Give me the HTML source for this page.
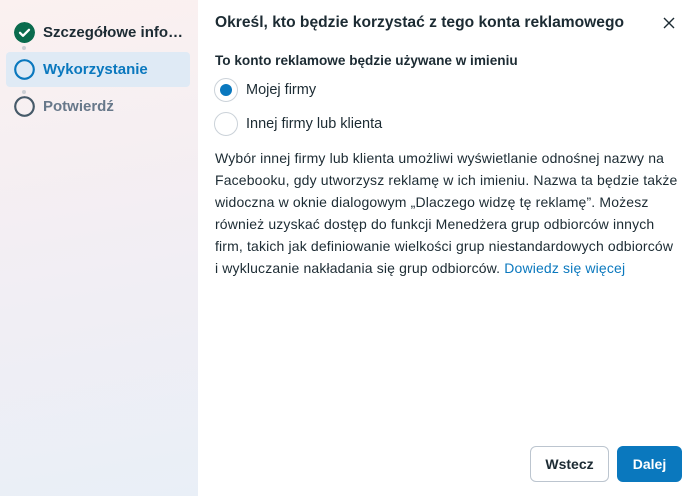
<!DOCTYPE html>
<html><head><meta charset="utf-8"><style>
*{margin:0;padding:0;box-sizing:border-box}
body{width:696px;height:496px;overflow:hidden;font-family:"Liberation Sans",sans-serif;color:#1c2b33;background:#fff;position:relative}
.side{position:absolute;left:0;top:0;width:198px;height:496px;background:linear-gradient(170deg,#fbf1f0 0%,#f3eef3 45%,#e9eff7 100%)}
.step{position:absolute;left:6px;width:184px;height:35px;display:flex;align-items:center;padding-left:8px;font-size:15px;font-weight:bold}
.step .ic{width:21px;height:21px;border-radius:50%;margin-right:8px;flex:none}
.dot{position:absolute;left:22px;width:4px;height:4px;border-radius:50%;background:#ccd0d5}
.main{position:absolute;left:198px;top:0;right:0;bottom:0}
h1{position:absolute;left:17px;top:14px;font-size:15.6px;font-weight:bold;color:#1c2b33}
.x{position:absolute;left:464px;top:16px}
.lbl{position:absolute;left:17px;top:53px;font-size:13.6px;font-weight:bold}
.r{position:absolute;left:16px;display:flex;align-items:center;font-size:14.5px}
.r .c{width:24px;height:24px;border-radius:50%;border:1px solid #cbd2d9;margin-right:8px;display:flex;align-items:center;justify-content:center;background:#fff}
.p{position:absolute;left:17px;top:147px;width:480px;font-size:14px;line-height:22px;letter-spacing:0.15px;white-space:nowrap}
.p a{color:#0a78be;text-decoration:none}
.b{position:absolute;top:446px;height:36px;border-radius:6px;font-size:14px;font-weight:bold;display:flex;align-items:center;justify-content:center}
</style></head><body>
<div class="side">
 <div class="step" style="top:15px"><svg class="ic" viewBox="0 0 21 21"><circle cx="10.5" cy="10.5" r="10.5" fill="#0a6b4d"/><path d="M6 10.8l3 3 6-6" stroke="#fff" stroke-width="2.3" fill="none" stroke-linecap="round" stroke-linejoin="round"/></svg><span>Szczegółowe info…</span></div>
 <div class="dot" style="top:46px"></div>
 <div class="step" style="top:52px;background:#dfeaf5;border-radius:4px;color:#0a78be"><svg class="ic" viewBox="0 0 21 21"><circle cx="10.5" cy="10.5" r="9.3" fill="none" stroke="#0a78be" stroke-width="2.2"/></svg><span>Wykorzystanie</span></div>
 <div class="dot" style="top:90px"></div>
 <div class="step" style="top:89px;color:#67788a"><svg class="ic" viewBox="0 0 21 21"><circle cx="10.5" cy="10.5" r="9.3" fill="none" stroke="#465a69" stroke-width="2.2"/></svg><span>Potwierdź</span></div>
</div>
<div class="main">
 <h1>Określ, kto będzie korzystać z tego konta reklamowego</h1>
 <svg class="x" width="14" height="14" viewBox="0 0 14 14"><path d="M2 2l10 10M12 2L2 12" stroke="#1c2b33" stroke-width="1.4"/></svg>
 <div class="lbl">To konto reklamowe będzie używane w imieniu</div>
 <div class="r" style="top:78px"><div class="c"><div style="width:12px;height:12px;border-radius:50%;background:#0a78be"></div></div>Mojej firmy</div>
 <div class="r" style="top:112px"><div class="c"></div>Innej firmy lub klienta</div>
 <div class="p">Wybór innej firmy lub klienta umożliwi wyświetlanie odnośnej nazwy na<br>Facebooku, gdy utworzysz reklamę w ich imieniu. Nazwa ta będzie także<br>widoczna w oknie dialogowym „Dlaczego widzę tę reklamę”. Możesz<br>również uzyskać dostęp do funkcji Menedżera grup odbiorców innych<br>firm, takich jak definiowanie wielkości grup niestandardowych odbiorców<br>i wykluczanie nakładania się grup odbiorców. <a>Dowiedz się więcej</a></div>
 <div class="b" style="left:332px;width:79px;border:1px solid #bcc5cf;color:#1c2b33">Wstecz</div>
 <div class="b" style="left:419px;width:65px;background:#0a78be;color:#fff">Dalej</div>
</div>
</body></html>
